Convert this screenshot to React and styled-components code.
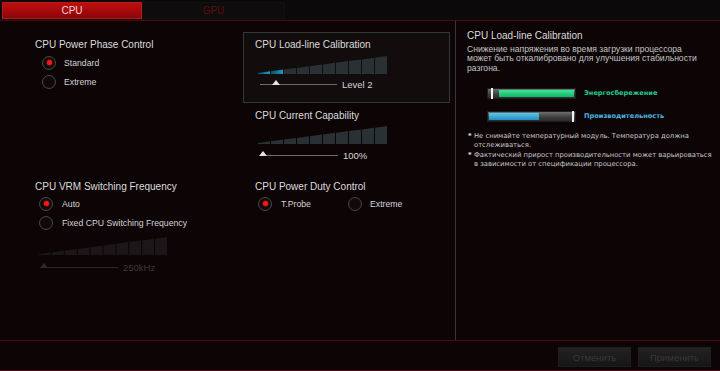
import React from "react";
import styled, { createGlobalStyle } from "styled-components";

const Global = createGlobalStyle`
  html, body { margin: 0; padding: 0; background: #0c0405; }
  body { font-family: "Liberation Sans", Arial, sans-serif; }
  * { box-sizing: border-box; }
`;

const Page = styled.div`
  width: 720px;
  height: 371px;
  display: flex;
  flex-direction: column;
  background: #0c0405;
  overflow: hidden;
`;

const TabBar = styled.div`
  height: 21px;
  display: flex;
  align-items: flex-start;
  padding: 2px 0 0 2px;
  background: #0b0909;
  border-bottom: 1px solid #4e0a0d;
`;

const Tab = styled.div`
  width: ${(p) => (p.$active ? 140 : 143)}px;
  height: 17px;
  display: flex;
  align-items: center;
  justify-content: center;
  font-size: 10px;
  color: ${(p) => (p.$active ? "#f0d8d8" : "#5e0c0e")};
  background: ${(p) =>
    p.$active ? "linear-gradient(#c10d0e, #8a0608)" : "#0e0c0c"};
  border: 1px solid ${(p) => (p.$active ? "#b8191a" : "#121010")};
`;

const Main = styled.div`
  height: 320px;
  display: flex;
  border-bottom: 1px solid #4e0a0d;
`;

const LeftPane = styled.div`
  width: 456px;
  border-right: 1px solid #3a3536;
  display: grid;
  grid-template-columns: 243px 212px;
  grid-template-rows: 160px 1fr;
`;

const Cell = styled.div`
  padding: ${(p) => p.$pad};
  display: flex;
  flex-direction: column;
  align-items: flex-start;
`;

const Title = styled.div`
  font-size: 10px;
  line-height: 12px;
  color: #dcdcdc;
  white-space: nowrap;
`;

const RadioList = styled.div`
  display: flex;
  flex-direction: ${(p) => (p.$row ? "row" : "column")};
  margin-top: ${(p) => p.$mt || 0}px;
  padding-left: ${(p) => p.$indent || 0}px;
`;

const RadioItem = styled.div`
  height: 19px;
  width: ${(p) => (p.$w ? p.$w + "px" : "auto")};
  display: flex;
  align-items: center;
  gap: ${(p) => p.$gap || 8}px;
  font-size: 8.7px;
  color: #d4d4d4;
  white-space: nowrap;
`;

const Ring = styled.span`
  width: 14px;
  height: 14px;
  border-radius: 50%;
  border: 1px solid #474747;
  background: radial-gradient(circle, #0e0a0a 55%, #1c1818 100%);
  display: flex;
  align-items: center;
  justify-content: center;
  flex: none;
  &::after {
    content: "";
    width: 5px;
    height: 5px;
    border-radius: 50%;
    background: ${(p) => (p.$on ? "#ff1414" : "transparent")};
    box-shadow: ${(p) => (p.$on ? "0 0 2px #ff2020" : "none")};
  }
`;

const Radio = ({ on, label, w, gap }) => (
  <RadioItem $w={w} $gap={gap}>
    <Ring $on={on} />
    {label}
  </RadioItem>
);

const Box = styled.div`
  width: 207px;
  height: 71px;
  margin-top: 11px;
  padding: 6px 0 0 11px;
  border: 1px solid #2e393c;
  background: #120c0c;
  display: flex;
  flex-direction: column;
  align-items: flex-start;
`;

const Section = styled.div`
  margin-top: ${(p) => p.$mt || 0}px;
  padding-left: ${(p) => p.$pl || 0}px;
  display: flex;
  flex-direction: column;
  align-items: flex-start;
`;

const ChartWrap = styled.div`
  margin-top: ${(p) => p.$mt}px;
  margin-left: ${(p) => p.$ml || 0}px;
  display: flex;
`;

const Chart = ({ width = 130, height = 18, color, accent, accentCount = 0 }) => {
  const n = 10;
  const step = width / n;
  const cols = [];
  for (let i = 0; i < n; i++) {
    const h0 = 1 + ((height - 1) * i) / n;
    const h1 = 1 + ((height - 1) * (i + 1)) / n;
    const x0 = i * step;
    const x1 = x0 + step - 1;
    const pts = `${x0},${height} ${x0},${height - h0} ${x1},${height - h1} ${x1},${height}`;
    cols.push(
      <polygon key={i} points={pts} fill={i < accentCount ? "url(#acc)" : color} />
    );
  }
  return (
    <svg width={width} height={height} viewBox={`0 0 ${width} ${height}`}>
      <defs>
        <linearGradient id="acc" x1="0" x2="1" y1="0" y2="0">
          <stop offset="0" stopColor="#0e4d66" />
          <stop offset="1" stopColor={accent || "#1c9ac4"} />
        </linearGradient>
      </defs>
      {cols}
    </svg>
  );
};

const SliderRow = styled.div`
  margin-top: ${(p) => p.$mt}px;
  margin-left: ${(p) => p.$ml || 0}px;
  height: 12px;
  display: flex;
  align-items: center;
  gap: 5px;
  font-size: 9.5px;
  color: ${(p) => (p.$dim ? "#3d3a3a" : "#d6d6d6")};
  white-space: nowrap;
`;

const Track = styled.div`
  position: relative;
  width: ${(p) => p.$w}px;
  height: 1px;
  background: ${(p) => (p.$dim ? "#2c2828" : "#6c6c6c")};
`;

const Thumb = styled.span`
  position: absolute;
  left: ${(p) => p.$x}px;
  bottom: 0;
  width: 0;
  height: 0;
  border-left: 4px solid transparent;
  border-right: 4px solid transparent;
  border-bottom: 5px solid ${(p) => (p.$dim ? "#2e2a2a" : "#e2e2e2")};
`;

const Slider = ({ w, x, value, dim, mt, ml }) => (
  <SliderRow $mt={mt} $ml={ml} $dim={dim}>
    <Track $w={w} $dim={dim}>
      <Thumb $x={x} $dim={dim} />
    </Track>
    {value}
  </SliderRow>
);

const RightPane = styled.div`
  flex: 1;
  padding: 9px 0 0 11px;
  display: flex;
  flex-direction: column;
  align-items: flex-start;
`;

const Desc = styled.div`
  margin-top: 3px;
  font-size: 8.6px;
  line-height: 9.3px;
  color: #c4c4c4;
  white-space: nowrap;
`;

const Bars = styled.div`
  margin-top: 15px;
  padding-left: 20px;
  display: flex;
  flex-direction: column;
  gap: 12px;
`;

const BarRow = styled.div`
  height: 11px;
  display: flex;
  align-items: center;
  gap: 8px;
`;

const BarTrack = styled.div`
  position: relative;
  width: 89px;
  height: 11px;
  background: linear-gradient(#6e6e6e, #3c3c3c 60%, #2c2c2c);
  border: 1px solid #1d1d1d;
  display: flex;
  align-items: center;
  padding-left: ${(p) => p.$fillStart}px;
`;

const BarFill = styled.div`
  width: ${(p) => p.$w}px;
  height: 7px;
  background: ${(p) => p.$bg};
`;

const Marker = styled.span`
  position: absolute;
  top: -1px;
  left: ${(p) => p.$x}px;
  width: 2px;
  height: 11px;
  background: #f4f4f4;
`;

const BarLabel = styled.span`
  font-family: "DejaVu Sans", sans-serif;
  font-size: 6.6px;
  font-weight: bold;
  color: ${(p) => p.$c};
  white-space: nowrap;
`;

const Notes = styled.div`
  margin-top: 10px;
  display: flex;
  flex-direction: column;
  gap: 1.5px;
`;

const Note = styled.div`
  display: flex;
  gap: 2px;
  font-family: "DejaVu Sans", sans-serif;
  font-size: 6.8px;
  line-height: 8.7px;
  color: #c8c8c8;
  white-space: nowrap;
`;

const Star = styled.span`
  width: 5px;
  padding-left: 1px;
  font-weight: bold;
  color: #e8e8e8;
`;

const Footer = styled.div`
  height: 30px;
  display: flex;
  justify-content: flex-end;
  align-items: flex-start;
  gap: 7px;
  padding: 6px 9px 0 0;
  border-bottom: 1px solid #4e0a0d;
`;

const Button = styled.div`
  width: 73px;
  height: 20px;
  display: flex;
  align-items: center;
  justify-content: center;
  font-size: 9.5px;
  color: #3a3838;
  background: linear-gradient(#232222, #171616);
  border: 1px solid #1f1d1d;
`;

export default function App() {
  return (
    <Page>
      <Global />
      <TabBar>
        <Tab $active>CPU</Tab>
        <Tab>GPU</Tab>
      </TabBar>
      <Main>
        <LeftPane>
          <Cell $pad="18px 0 0 35px">
            <Title>CPU Power Phase Control</Title>
            <RadioList $mt={2} $indent={7}>
              <Radio on label="Standard" />
              <Radio label="Extreme" />
            </RadioList>
          </Cell>
          <Cell $pad="0">
            <Box>
              <Title>CPU Load-line Calibration</Title>
              <ChartWrap $mt={5} $ml={3}>
                <Chart color="#2a3135" accentCount={2} />
              </ChartWrap>
              <Slider mt={4} ml={5} w={77} x={12} value="Level 2" />
            </Box>
            <Section $mt={7} $pl={12}>
              <Title>CPU Current Capability</Title>
              <ChartWrap $mt={4} $ml={3}>
                <Chart color="#2a3135" />
              </ChartWrap>
              <Slider mt={5} ml={5} w={78} x={-1} value="100%" />
            </Section>
          </Cell>
          <Cell $pad="0 0 0 35px">
            <Title>CPU VRM Switching Frequency</Title>
            <RadioList $mt={1} $indent={4}>
              <Radio on label="Auto" gap={9} />
              <Radio label="Fixed CPU Switching Frequency" gap={9} />
            </RadioList>
            <ChartWrap $mt={5} $ml={4}>
              <Chart width={129} color="#1b1718" />
            </ChartWrap>
            <Slider mt={6} ml={5} w={78} x={0} value="250kHz" dim />
          </Cell>
          <Cell $pad="0 0 0 12px">
            <Title>CPU Power Duty Control</Title>
            <RadioList $row $mt={1} $indent={3}>
              <Radio on label="T.Probe" w={90} gap={9} />
              <Radio label="Extreme" gap={8} />
            </RadioList>
          </Cell>
        </LeftPane>
        <RightPane>
          <Title>CPU Load-line Calibration</Title>
          <Desc>
            Снижение напряжения во время загрузки процессора
            <br />
            может быть откалибровано для улучшения стабильности
            <br />
            разгона.
          </Desc>
          <Bars>
            <BarRow>
              <BarTrack $fillStart={11}>
                <BarFill $w={75} $bg="linear-gradient(#3fe79a, #12b464)" />
                <Marker $x={3} />
              </BarTrack>
              <BarLabel $c="#27c98a">Энергосбережение</BarLabel>
            </BarRow>
            <BarRow>
              <BarTrack $fillStart={1}>
                <BarFill $w={50} $bg="linear-gradient(#5cc6ee, #1f8ec0)" />
                <Marker $x={84} />
              </BarTrack>
              <BarLabel $c="#4cb6e0">Производительность</BarLabel>
            </BarRow>
          </Bars>
          <Notes>
            <Note>
              <Star>*</Star>
              <span>
                Не снимайте температурный модуль. Температура должна
                <br />
                отслеживаться.
              </span>
            </Note>
            <Note>
              <Star>*</Star>
              <span>
                Фактический прирост производительности может варьироваться
                <br />в зависимости от спецификации процессора.
              </span>
            </Note>
          </Notes>
        </RightPane>
      </Main>
      <Footer>
        <Button>Отменить</Button>
        <Button>Применить</Button>
      </Footer>
    </Page>
  );
}
